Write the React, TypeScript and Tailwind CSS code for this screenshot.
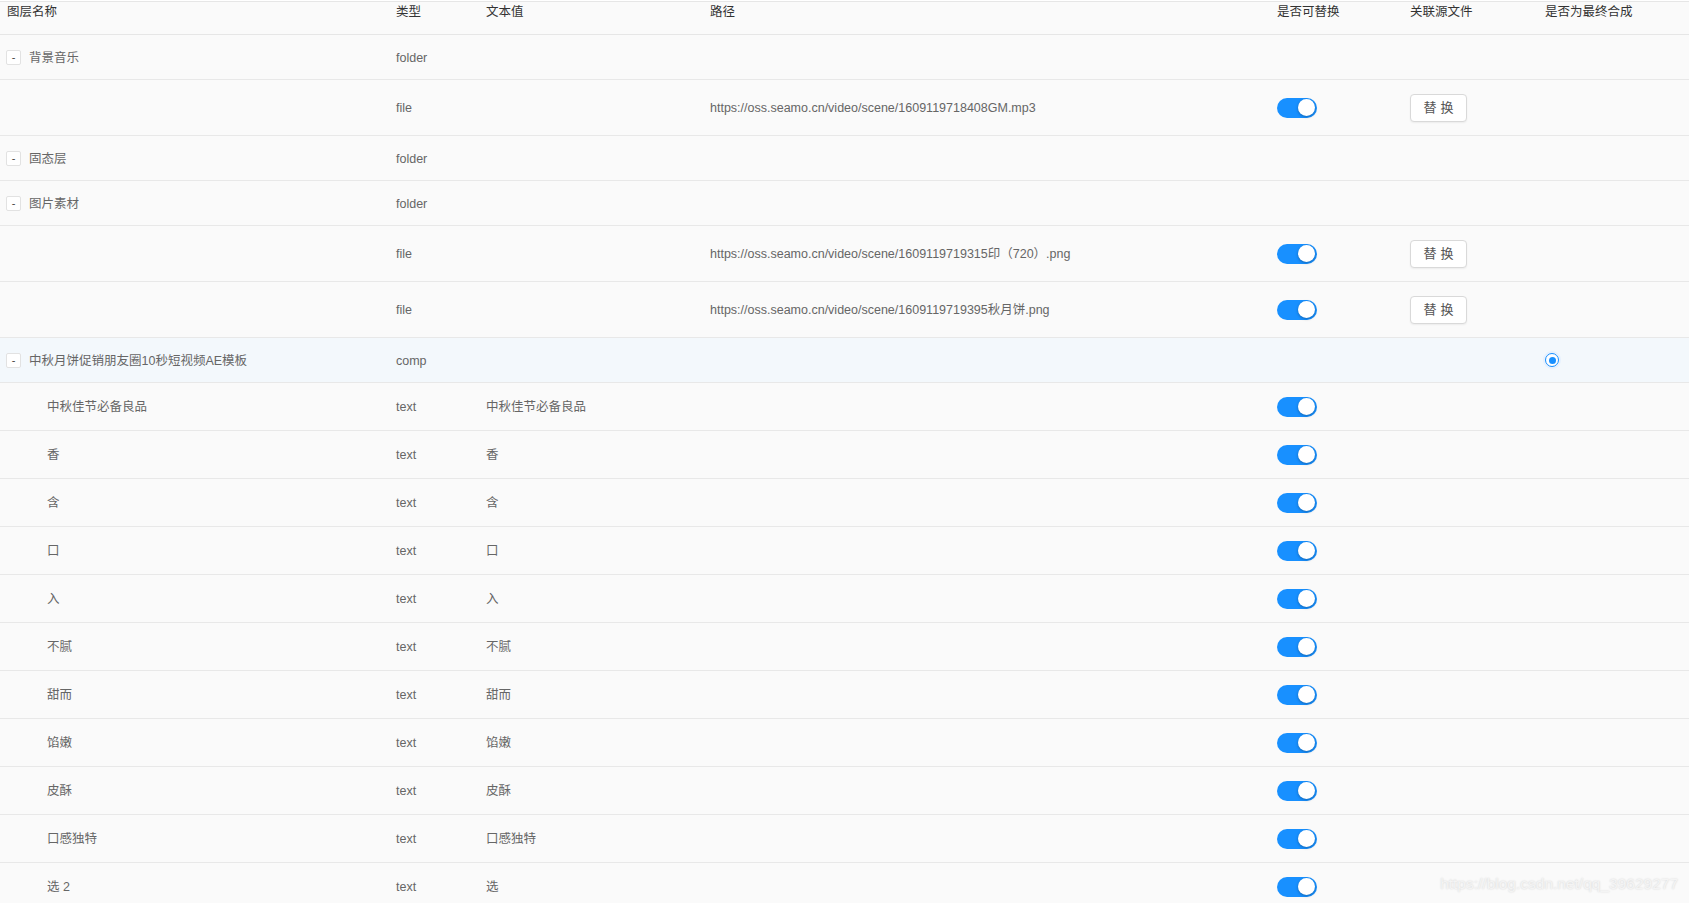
import React from "react";

type Row =
  | { kind: "folder"; name: string; type: string; highlight?: boolean; radio?: boolean }
  | { kind: "file"; url: string }
  | { kind: "text"; name: string; value: string };

const rows: Row[] = [
  { kind: "folder", name: "背景音乐", type: "folder" },
  { kind: "file", url: "https://oss.seamo.cn/video/scene/1609119718408GM.mp3" },
  { kind: "folder", name: "固态层", type: "folder" },
  { kind: "folder", name: "图片素材", type: "folder" },
  { kind: "file", url: "https://oss.seamo.cn/video/scene/1609119719315印（720）.png" },
  { kind: "file", url: "https://oss.seamo.cn/video/scene/1609119719395秋月饼.png" },
  { kind: "folder", name: "中秋月饼促销朋友圈10秒短视频AE模板", type: "comp", highlight: true, radio: true },
  { kind: "text", name: "中秋佳节必备良品", value: "中秋佳节必备良品" },
  { kind: "text", name: "香", value: "香" },
  { kind: "text", name: "含", value: "含" },
  { kind: "text", name: "口", value: "口" },
  { kind: "text", name: "入", value: "入" },
  { kind: "text", name: "不腻", value: "不腻" },
  { kind: "text", name: "甜而", value: "甜而" },
  { kind: "text", name: "馅嫩", value: "馅嫩" },
  { kind: "text", name: "皮酥", value: "皮酥" },
  { kind: "text", name: "口感独特", value: "口感独特" },
  { kind: "text", name: "选 2", value: "选" },
];

const grid = "grid grid-cols-[389px_90px_224px_567px_133px_135px_1fr] items-center";

function Toggle() {
  return (
    <div className="w-[40px] h-[20px] rounded-full bg-[#1890ff] flex items-center justify-end pr-[2px]">
      <div className="w-[17px] h-[17px] rounded-full bg-white shadow-[0_1px_3px_rgba(0,0,0,0.3)]" />
    </div>
  );
}

function ReplaceButton() {
  return (
    <div className="w-[57px] h-[28px] rounded-[4px] border border-[#d9d9d9] bg-white flex items-center justify-center text-[13px] text-[#555] tracking-[4px] pl-[4px] shadow-[0_1px_2px_rgba(0,0,0,0.06)]">
      替换
    </div>
  );
}

function Minus() {
  return (
    <div className="w-[15px] h-[15px] border border-[#e2e2e2] bg-white rounded-[2px] flex items-center justify-center text-[11px] leading-none text-[#444] mr-[8px]">
      -
    </div>
  );
}

function Radio() {
  return (
    <div className="ml-[5px] w-[18px] h-[18px] rounded-full bg-[#e6f1fe] flex items-center justify-center">
      <div className="w-[14px] h-[14px] rounded-full border-[1.5px] border-[#1890ff] bg-white flex items-center justify-center">
        <div className="w-[7px] h-[7px] rounded-full bg-[#1890ff]" />
      </div>
    </div>
  );
}

export default function App() {
  return (
    <div
      className="relative w-[1689px] h-[903px] overflow-hidden bg-white text-[12.5px] text-[#666]"
      style={{ fontFamily: '"Liberation Sans", "Noto Sans CJK SC", sans-serif' }}
    >
      <div className="mt-px bg-[#fafafa]">
        <div className={`${grid} h-[34px] border-t border-b border-[#e6e6e6] items-start text-[#333] leading-[16px]`}>
          <div className="pl-[7px] pt-[2px]">图层名称</div>
          <div className="pl-[7px] pt-[2px]">类型</div>
          <div className="pl-[7px] pt-[2px]">文本值</div>
          <div className="pl-[7px] pt-[2px]">路径</div>
          <div className="pl-[7px] pt-[2px]">是否可替换</div>
          <div className="pl-[7px] pt-[2px]">关联源文件</div>
          <div className="pl-[7px] pt-[2px]">是否为最终合成</div>
        </div>
        {rows.map((r, i) => {
          if (r.kind === "folder") {
            return (
              <div
                key={i}
                className={`${grid} h-[45px] border-b border-[#e8e8e8] ${r.highlight ? "bg-[#f3f8fc]" : ""}`}
              >
                <div className="pl-[6px] flex items-center">
                  <Minus />
                  <span className="pt-[2px]">{r.name}</span>
                </div>
                <div className="pl-[7px] pt-[2px]">{r.type}</div>
                <div />
                <div />
                <div />
                <div />
                <div>{r.radio ? <Radio /> : null}</div>
              </div>
            );
          }
          if (r.kind === "file") {
            return (
              <div key={i} className={`${grid} h-[56px] border-b border-[#e8e8e8]`}>
                <div />
                <div className="pl-[7px] pt-[2px]">file</div>
                <div />
                <div className="pl-[7px] pt-[2px] whitespace-nowrap">{r.url}</div>
                <div className="pl-[7px]">
                  <Toggle />
                </div>
                <div className="pl-[7px]">
                  <ReplaceButton />
                </div>
                <div />
              </div>
            );
          }
          return (
            <div key={i} className={`${grid} h-[48px] border-b border-[#e8e8e8]`}>
              <div className="pl-[47px] pt-[2px]">{r.name}</div>
              <div className="pl-[7px] pt-[2px]">text</div>
              <div className="pl-[7px] pt-[2px]">{r.value}</div>
              <div />
              <div className="pl-[7px]">
                <Toggle />
              </div>
              <div />
              <div />
            </div>
          );
        })}
      </div>
      <div
        className="absolute right-[11px] bottom-[8px] text-[15.5px] text-[#f4f4f4] [text-shadow:0_0_2px_rgba(0,0,0,0.18)]"
        style={{ fontFamily: '"Liberation Sans", sans-serif' }}
      >
        https://blog.csdn.net/qq_39629277
      </div>
    </div>
  );
}
